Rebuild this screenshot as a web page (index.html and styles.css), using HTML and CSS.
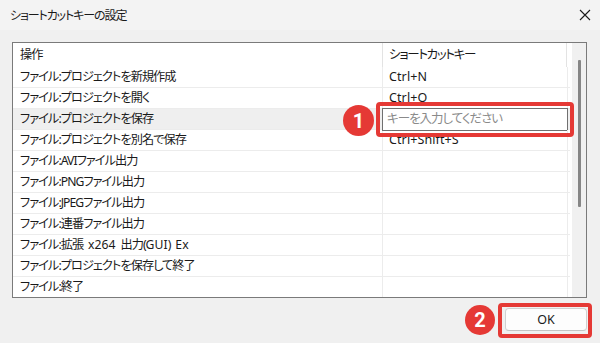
FILE: index.html
```html
<!DOCTYPE html>
<html lang="ja">
<head>
<meta charset="utf-8">
<link rel="stylesheet" href="styles.css">
</head>
<body>
<div class="window">
  <div class="titlebar">
    <span class="title">ショートカットキーの設定</span>
    <svg class="close" width="12" height="12" viewBox="0 0 12 12"><path d="M1 1L11 11M11 1L1 11" stroke="#1a1a1a" stroke-width="1.1" fill="none"/></svg>
  </div>
  <div class="content">
    <div class="list">
      <div class="table">
        <div class="row head"><div class="c1">操作</div><div class="c2 jp">ショートカットキー</div></div>
        <div class="row"><div class="c1">ファイル:プロジェクトを新規作成</div><div class="c2">Ctrl+N</div></div>
        <div class="row"><div class="c1">ファイル:プロジェクトを開く</div><div class="c2">Ctrl+O</div></div>
        <div class="row sel"><div class="c1">ファイル:プロジェクトを保存</div><div class="c2 editing"><div class="keyinput">キーを入力してください</div></div></div>
        <div class="row"><div class="c1">ファイル:プロジェクトを別名で保存</div><div class="c2">Ctrl+Shift+S</div></div>
        <div class="row"><div class="c1">ファイル:AVIファイル出力</div><div class="c2"></div></div>
        <div class="row"><div class="c1">ファイル:PNGファイル出力</div><div class="c2"></div></div>
        <div class="row"><div class="c1">ファイル:JPEGファイル出力</div><div class="c2"></div></div>
        <div class="row"><div class="c1">ファイル:連番ファイル出力</div><div class="c2"></div></div>
        <div class="row"><div class="c1">ファイル:拡張 <span class="lat">x264</span> 出力(<span class="lat">GUI</span>) <span class="lat">Ex</span></div><div class="c2"></div></div>
        <div class="row"><div class="c1">ファイル:プロジェクトを保存して終了</div><div class="c2"></div></div>
        <div class="row"><div class="c1">ファイル:終了</div><div class="c2"></div></div>
      </div>
      <div class="scrollbar"><div class="thumb"></div></div>
    </div>
    <div class="footer">
      <button class="ok">OK</button>
    </div>
  </div>
  <div class="mark mark-input"></div>
  <div class="badge badge-1">1</div>
  <div class="mark mark-ok"></div>
  <div class="badge badge-2">2</div>
</div>
</body>
</html>
```
FILE: styles.css
```css
html, body {
  margin: 0;
  padding: 0;
}
body {
  width: 600px;
  height: 343px;
  overflow: hidden;
  background: #f0f0f0;
  font-family: "Noto Sans", "Noto Sans CJK JP", sans-serif;
  font-size: 12px;
  color: #1a1a1a;
  font-feature-settings: "palt";
}
.window {
  position: relative;
  width: 600px;
  height: 343px;
  display: flex;
  flex-direction: column;
}
.titlebar {
  height: 30px;
  background: #f3f3f3;
  display: flex;
  align-items: center;
  justify-content: space-between;
  padding: 0 9px 1px 10px;
  box-sizing: border-box;
}
.title {
  font-size: 12px;
  color: #1a1a1a;
  letter-spacing: -1.1px;
}
.close {
  display: block;
}
.content {
  padding: 12px 13px 0 12px;
  display: flex;
  flex-direction: column;
}
.list {
  height: 256px;
  box-sizing: border-box;
  border: 1px solid #7a7a7a;
  background: #fff;
  display: flex;
  overflow: hidden;
}
.table {
  width: 558px;
  flex: none;
  display: flex;
  flex-direction: column;
}
.row {
  display: flex;
  height: 21px;
  flex: none;
  box-sizing: border-box;
  border-bottom: 1px solid #ececec;
  width: 557px;
}
.row.head {
  height: 24px;
  border-bottom: none;
}
.row.sel {
  background: #efefef;
}
.c1 {
  width: 370px;
  box-sizing: border-box;
  padding-left: 7px;
  border-right: 1px solid #ececec;
  line-height: 20px;
  white-space: nowrap;
  font-size: 12.2px;
  letter-spacing: -0.95px;
  word-spacing: 2.5px;
}
.lat {
  letter-spacing: 0.1px;
}
.c2 {
  width: 185px;
  box-sizing: border-box;
  padding-left: 6px;
  border-right: 1px solid #ececec;
  line-height: 20px;
  white-space: nowrap;
  position: relative;
  font-size: 12.5px;
  letter-spacing: 0.1px;
}
.c2.jp {
  letter-spacing: -1.3px;
}
.head .c1, .head .c2 {
  line-height: 23px;
}
.head .c1 {
  border-right: none;
}
.head .c2 {
  border-left: 1px solid #e3e3e3;
  border-right-color: #e3e3e3;
  margin-left: -1px;
}
.editing {
  background: #fff;
}
.keyinput {
  position: absolute;
  left: -1px;
  top: -1px;
  right: -1px;
  bottom: -2px;
  box-sizing: border-box;
  border: 1px solid #707070;
  background: #fff;
  color: #8a8a8a;
  padding-left: 4px;
  line-height: 20px;
  letter-spacing: -1px;
}
.scrollbar {
  flex: 1;
  background: #f0f0f0;
  position: relative;
  border-left: 1px solid #fff;
}
.thumb {
  position: absolute;
  left: 6px;
  top: 17px;
  width: 3px;
  height: 147px;
  background: #868686;
  border-radius: 1px;
}
.footer {
  display: flex;
  justify-content: flex-end;
  padding-top: 10px;
}
.ok {
  width: 82px;
  height: 23px;
  box-sizing: border-box;
  border: 1px solid #d0d0d0;
  border-bottom-color: #c4c4c4;
  border-radius: 4px;
  background: #fdfdfd;
  font-family: "Noto Sans", sans-serif;
  font-size: 12.5px;
  color: #1a1a1a;
  padding: 0;
  margin: 0;
}
.mark {
  position: absolute;
  border: 4px solid #e53935;
  border-radius: 4px;
  box-sizing: border-box;
}
.mark-input {
  left: 376px;
  top: 102px;
  width: 198px;
  height: 35px;
}
.mark-ok {
  left: 498px;
  top: 303px;
  width: 94px;
  height: 35px;
}
.badge {
  position: absolute;
  width: 31px;
  height: 31px;
  border-radius: 50%;
  background: #e53935;
  color: #fff;
  font-family: Roboto, "Liberation Sans", sans-serif;
  font-weight: 700;
  font-size: 20px;
  display: flex;
  align-items: center;
  justify-content: center;
}
.badge-1 {
  left: 343px;
  top: 105px;
}
.badge-2 {
  left: 465px;
  top: 305px;
  width: 30px;
  height: 30px;
}
```
